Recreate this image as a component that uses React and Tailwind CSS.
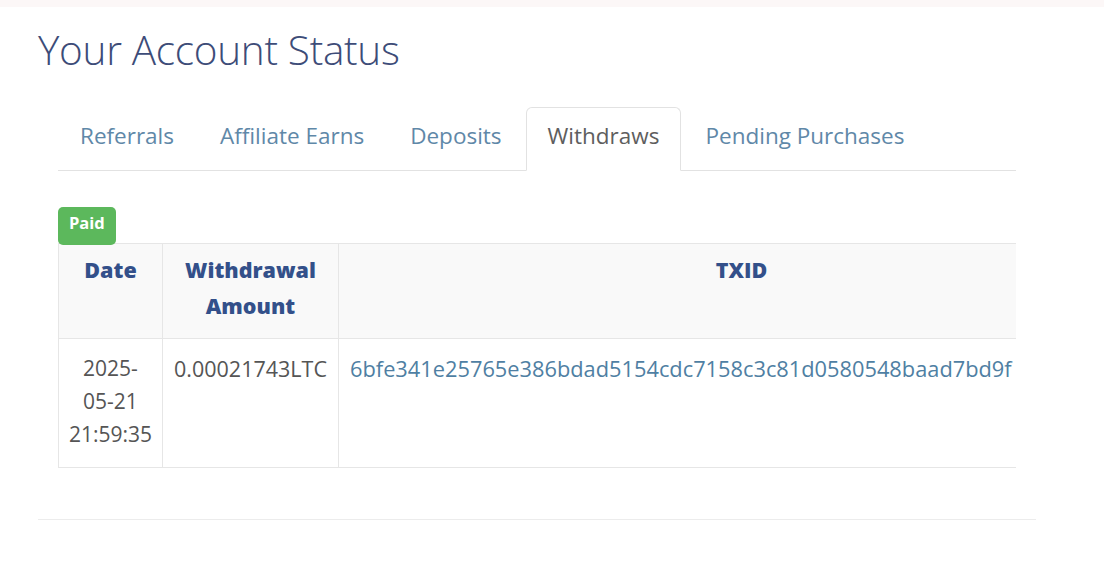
import React from 'react';

const tabs = ['Referrals', 'Affiliate Earns', 'Deposits', 'Withdraws', 'Pending Purchases'];

const rows = [
  {
    date: ['2025-', '05-21', '21:59:35'],
    amount: '0.00021743LTC',
    txid: '6bfe341e25765e386bdad5154cdc7158c3c81d0580548baad7bd9f',
  },
];

const App = () => {
  const active = 'Withdraws';

  return (
    <div className="min-h-[563px] bg-white font-['Open_Sans',sans-serif]">
      <div className="h-[7px] bg-[#fcf7f7]" />

      <div className="w-[998px] ml-[38px]">
        <h1 className="pt-[21px] text-[40.5px] leading-[44px] font-light text-[#3d4c78] tracking-[-0.3px]">
          Your Account Status
        </h1>

        <div className="px-[20px] pt-[35px]">
          <ul className="flex border-b border-[#e2e2e2] h-[64px]">
            {tabs.map((tab) => (
              <li key={tab} className="mr-[2px]">
                <a
                  href="#"
                  className={
                    tab === active
                      ? 'block h-[64px] px-[21px] pt-[13px] text-[22.5px] leading-[30px] text-[#5e5e5e] bg-white border border-[#e2e2e2] border-b-white rounded-t-[6px]'
                      : 'block h-[64px] px-[21px] pt-[13px] text-[22.5px] leading-[30px] text-[#5f88a8] border border-transparent'
                  }
                >
                  {tab}
                </a>
              </li>
            ))}
          </ul>

          <div className="pt-[36px] w-[958px] overflow-hidden">
            <span className="relative z-10 inline-block bg-[#5cb85c] text-white text-[16.5px] font-bold leading-[22px] px-[11px] pt-[5px] pb-[11px] rounded-[5px]">
              Paid
            </span>
            <table className="-mt-[2px] table-fixed border-collapse w-[1086px]">
              <colgroup>
                <col className="w-[104px]" />
                <col className="w-[176px]" />
                <col className="w-[806px]" />
              </colgroup>
              <thead>
                <tr className="bg-[#f9f9f9]">
                  {['Date', 'Withdrawal Amount', 'TXID'].map((h) => (
                    <th
                      key={h}
                      className="align-top border border-[#e6e6e6] px-[10px] pt-[8px] pb-[14px] text-[21.5px] leading-[36px] font-extrabold text-[#33508a] text-center"
                    >
                      {h}
                    </th>
                  ))}
                </tr>
              </thead>
              <tbody>
                {rows.map((r) => (
                  <tr key={r.txid}>
                    <td className="align-top border border-[#e6e6e6] px-[6px] pt-[13px] pb-[16px] text-[21px] leading-[33px] text-[#555] text-center">
                      {r.date.map((d) => (
                        <div key={d}>{d}</div>
                      ))}
                    </td>
                    <td className="align-top border border-[#e6e6e6] px-[6px] pt-[13px] text-[21.5px] leading-[33px] text-[#555] text-center">
                      {r.amount}
                    </td>
                    <td className="align-top border border-[#e6e6e6] px-[11px] pt-[13px] text-[21.8px] leading-[33px] text-[#4f7fa3] text-left whitespace-nowrap">
                      {r.txid}
                    </td>
                  </tr>
                ))}
              </tbody>
            </table>
          </div>
        </div>

        <div className="mt-[51px] border-t border-[#ececec]" />
      </div>
    </div>
  );
};

export default App;
